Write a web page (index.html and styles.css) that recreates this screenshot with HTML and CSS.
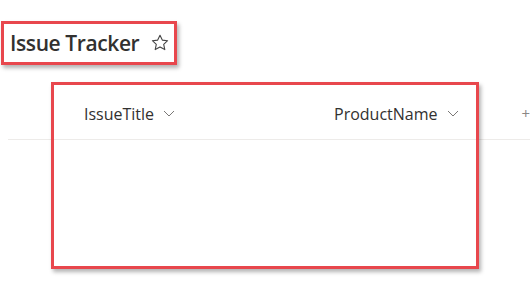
FILE: index.html
```html
<!DOCTYPE html>
<html lang="en">

<head>
    <meta charset="UTF-8">
    <meta name="viewport" content="width=device-width, initial-scale=1.0">
    <title>Issue Tracker</title>
    <link rel="stylesheet" href="styles.css">
</head>

<body>
    <div class="page">
        <div class="title-bar">
            <h1>Issue Tracker</h1>
            <svg class="star" width="18" height="17" viewBox="0 0 18 17">
                <path d="M9 1.2l2.3 4.9 5.3.6-3.9 3.6 1.1 5.3L9 12.9l-4.8 2.7 1.1-5.3-3.9-3.6 5.3-.6z" fill="none" stroke="#444" stroke-width="1.1" stroke-linejoin="round" />
            </svg>
        </div>

        <div class="list">
            <div class="list-head">
                <div class="col col-title">
                    IssueTitle
                    <svg class="chevron" width="12" height="7" viewBox="0 0 12 7"><path d="M1 1l5 5 5-5" fill="none" stroke="#7a7876" stroke-width="1" /></svg>
                </div>
                <div class="col col-product">
                    ProductName
                    <svg class="chevron" width="12" height="7" viewBox="0 0 12 7"><path d="M1 1l5 5 5-5" fill="none" stroke="#7a7876" stroke-width="1" /></svg>
                </div>
                <div class="col-add">+</div>
            </div>
            <!-- annotation box over the column headers -->
            <div class="highlight"></div>
        </div>
    </div>
</body>

</html>
```

FILE: styles.css
```css
body,
html {
    margin: 0;
    padding: 0;
    background: #ffffff;
    font-family: 'Open Sans', 'Noto Sans', sans-serif;
    color: #323130;
    overflow: hidden;
}

.page {
    position: relative;
    width: 530px;
    height: 284px;
    padding-top: 21px;
    box-sizing: border-box;
}

.title-bar {
    display: inline-flex;
    align-items: center;
    box-sizing: border-box;
    height: 44px;
    width: 176px;
    margin-left: 1px;
    padding-left: 6px;
    border: 3px solid #e8474d;
    box-shadow: 2px 3px 4px rgba(0, 0, 0, 0.3);
}

.title-bar h1 {
    margin: 0;
    font-size: 21px;
    font-weight: 600;
    letter-spacing: -0.4px;
    line-height: 1;
    color: #323130;
}

.star {
    margin-left: 12px;
    margin-top: -2px;
}

.list {
    margin-top: 23px;
}

.list-head {
    display: flex;
    align-items: center;
    height: 51px;
    margin-left: 8px;
    border-bottom: 1px solid #edebe9;
    font-size: 16px;
}

.col {
    display: flex;
    align-items: center;
    gap: 9px;
}

.col-title {
    width: 326px;
    padding-left: 76px;
    box-sizing: border-box;
}

.col-add {
    margin-left: auto;
    color: #8a8886;
    font-size: 15px;
    line-height: 1;
}

.highlight {
    position: absolute;
    left: 51px;
    top: 82px;
    width: 428px;
    height: 187px;
    box-sizing: border-box;
    border: 3px solid #e8474d;
    box-shadow: 2px 3px 4px rgba(0, 0, 0, 0.3);
}
```
